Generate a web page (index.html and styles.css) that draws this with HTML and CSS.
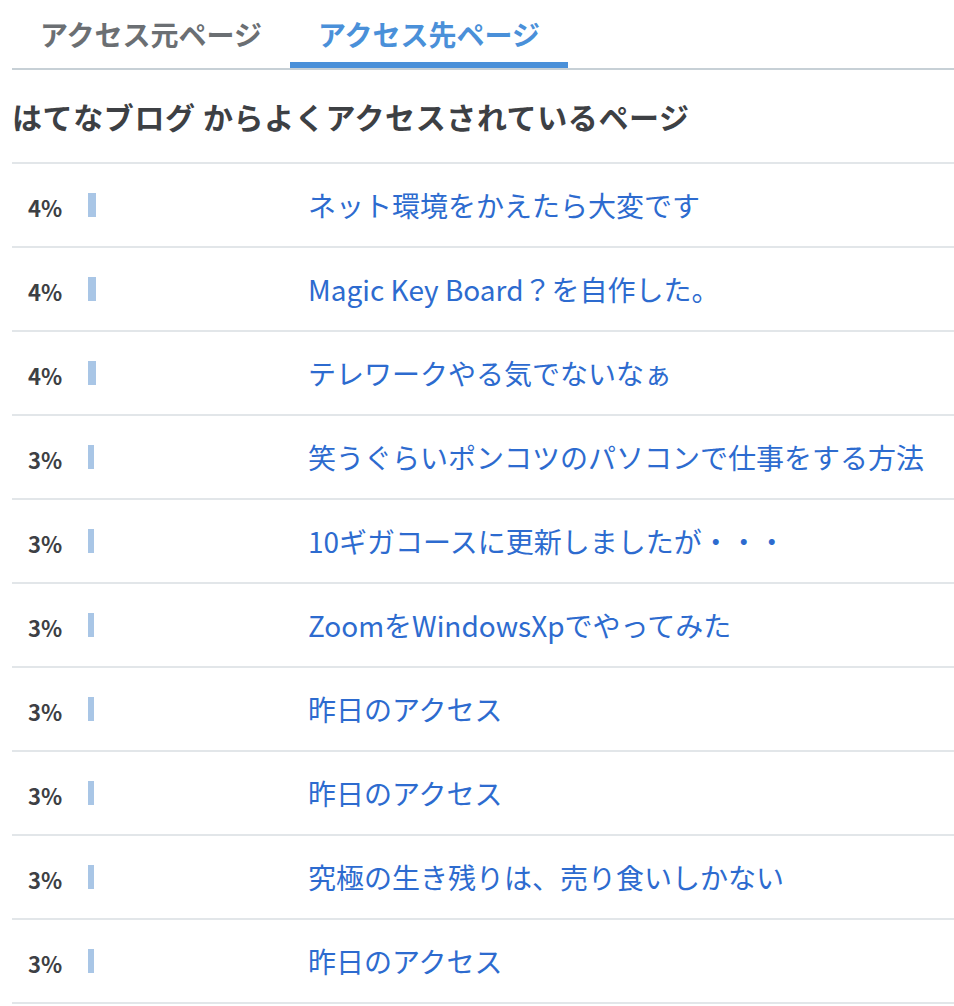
FILE: index.html
```html
<!DOCTYPE html>
<html lang="ja">
<head>
    <meta charset="UTF-8">
    <meta name="viewport" content="width=device-width, initial-scale=1.0">
    <title>アクセス先ページ</title>
    <link rel="stylesheet" href="styles.css">
</head>
<body>
    <div class="panel">
        <!-- Tabs -->
        <div class="tabs">
            <a href="#" class="tab">アクセス元ページ</a>
            <a href="#" class="tab active">アクセス先ページ</a>
        </div>

        <h2 class="heading">はてなブログ からよくアクセスされているページ</h2>

        <!-- Ranking -->
        <ul class="ranking">
            <li class="row">
                <span class="percent">4%</span>
                <span class="bar-area"><span class="bar" style="width: 4%;"></span></span>
                <a href="#" class="page-link">ネット環境をかえたら大変です</a>
            </li>
            <li class="row">
                <span class="percent">4%</span>
                <span class="bar-area"><span class="bar" style="width: 4%;"></span></span>
                <a href="#" class="page-link">Magic Key Board？を自作した。</a>
            </li>
            <li class="row">
                <span class="percent">4%</span>
                <span class="bar-area"><span class="bar" style="width: 4%;"></span></span>
                <a href="#" class="page-link">テレワークやる気でないなぁ</a>
            </li>
            <li class="row">
                <span class="percent">3%</span>
                <span class="bar-area"><span class="bar" style="width: 3%;"></span></span>
                <a href="#" class="page-link">笑うぐらいポンコツのパソコンで仕事をする方法</a>
            </li>
            <li class="row">
                <span class="percent">3%</span>
                <span class="bar-area"><span class="bar" style="width: 3%;"></span></span>
                <a href="#" class="page-link">10ギガコースに更新しましたが・・・</a>
            </li>
            <li class="row">
                <span class="percent">3%</span>
                <span class="bar-area"><span class="bar" style="width: 3%;"></span></span>
                <a href="#" class="page-link">ZoomをWindowsXpでやってみた</a>
            </li>
            <li class="row">
                <span class="percent">3%</span>
                <span class="bar-area"><span class="bar" style="width: 3%;"></span></span>
                <a href="#" class="page-link">昨日のアクセス</a>
            </li>
            <li class="row">
                <span class="percent">3%</span>
                <span class="bar-area"><span class="bar" style="width: 3%;"></span></span>
                <a href="#" class="page-link">昨日のアクセス</a>
            </li>
            <li class="row">
                <span class="percent">3%</span>
                <span class="bar-area"><span class="bar" style="width: 3%;"></span></span>
                <a href="#" class="page-link">究極の生き残りは、売り食いしかない</a>
            </li>
            <li class="row">
                <span class="percent">3%</span>
                <span class="bar-area"><span class="bar" style="width: 3%;"></span></span>
                <a href="#" class="page-link">昨日のアクセス</a>
            </li>
        </ul>
    </div>
</body>
</html>
```

FILE: styles.css
```css
body {
    margin: 0;
    background: #ffffff;
    font-family: "Noto Sans CJK JP", "Noto Sans", sans-serif;
    color: #3d4044;
}
.panel {
    margin-left: 12px;
}
.tabs {
    display: flex;
    border-bottom: 2px solid #c7d0d6;
}
.tab {
    width: 278px;
    box-sizing: border-box;
    padding: 14px 0 8px;
    text-align: center;
    font-size: 28px;
    line-height: 40px;
    font-weight: bold;
    color: #6b6f73;
    text-decoration: none;
    border-bottom: 6px solid transparent;
}
.tab.active {
    color: #4a90d9;
    border-bottom-color: #4a90d9;
}
.heading {
    margin: 0;
    padding: 26px 0 26px;
    font-size: 30px;
    line-height: 40px;
    font-weight: bold;
    letter-spacing: 0.6px;
    color: #3d4044;
}
.ranking {
    list-style: none;
    margin: 0;
    padding: 0;
    border-top: 2px solid #e2e6e9;
}
.row {
    display: flex;
    align-items: center;
    height: 82px;
    padding-left: 16px;
    border-bottom: 2px solid #e2e6e9;
}
.percent {
    width: 60px;
    margin-top: 4px;
    font-size: 22px;
    font-weight: bold;
    color: #3d4044;
}
.bar-area {
    display: block;
    width: 200px;
    margin-right: 20px;
}
.bar {
    display: block;
    height: 24px;
    background: #a9c6e6;
}
.page-link {
    font-size: 28px;
    line-height: 40px;
    color: #2d6bcf;
    text-decoration: none;
}
.page-link:hover {
    text-decoration: underline;
}
```
